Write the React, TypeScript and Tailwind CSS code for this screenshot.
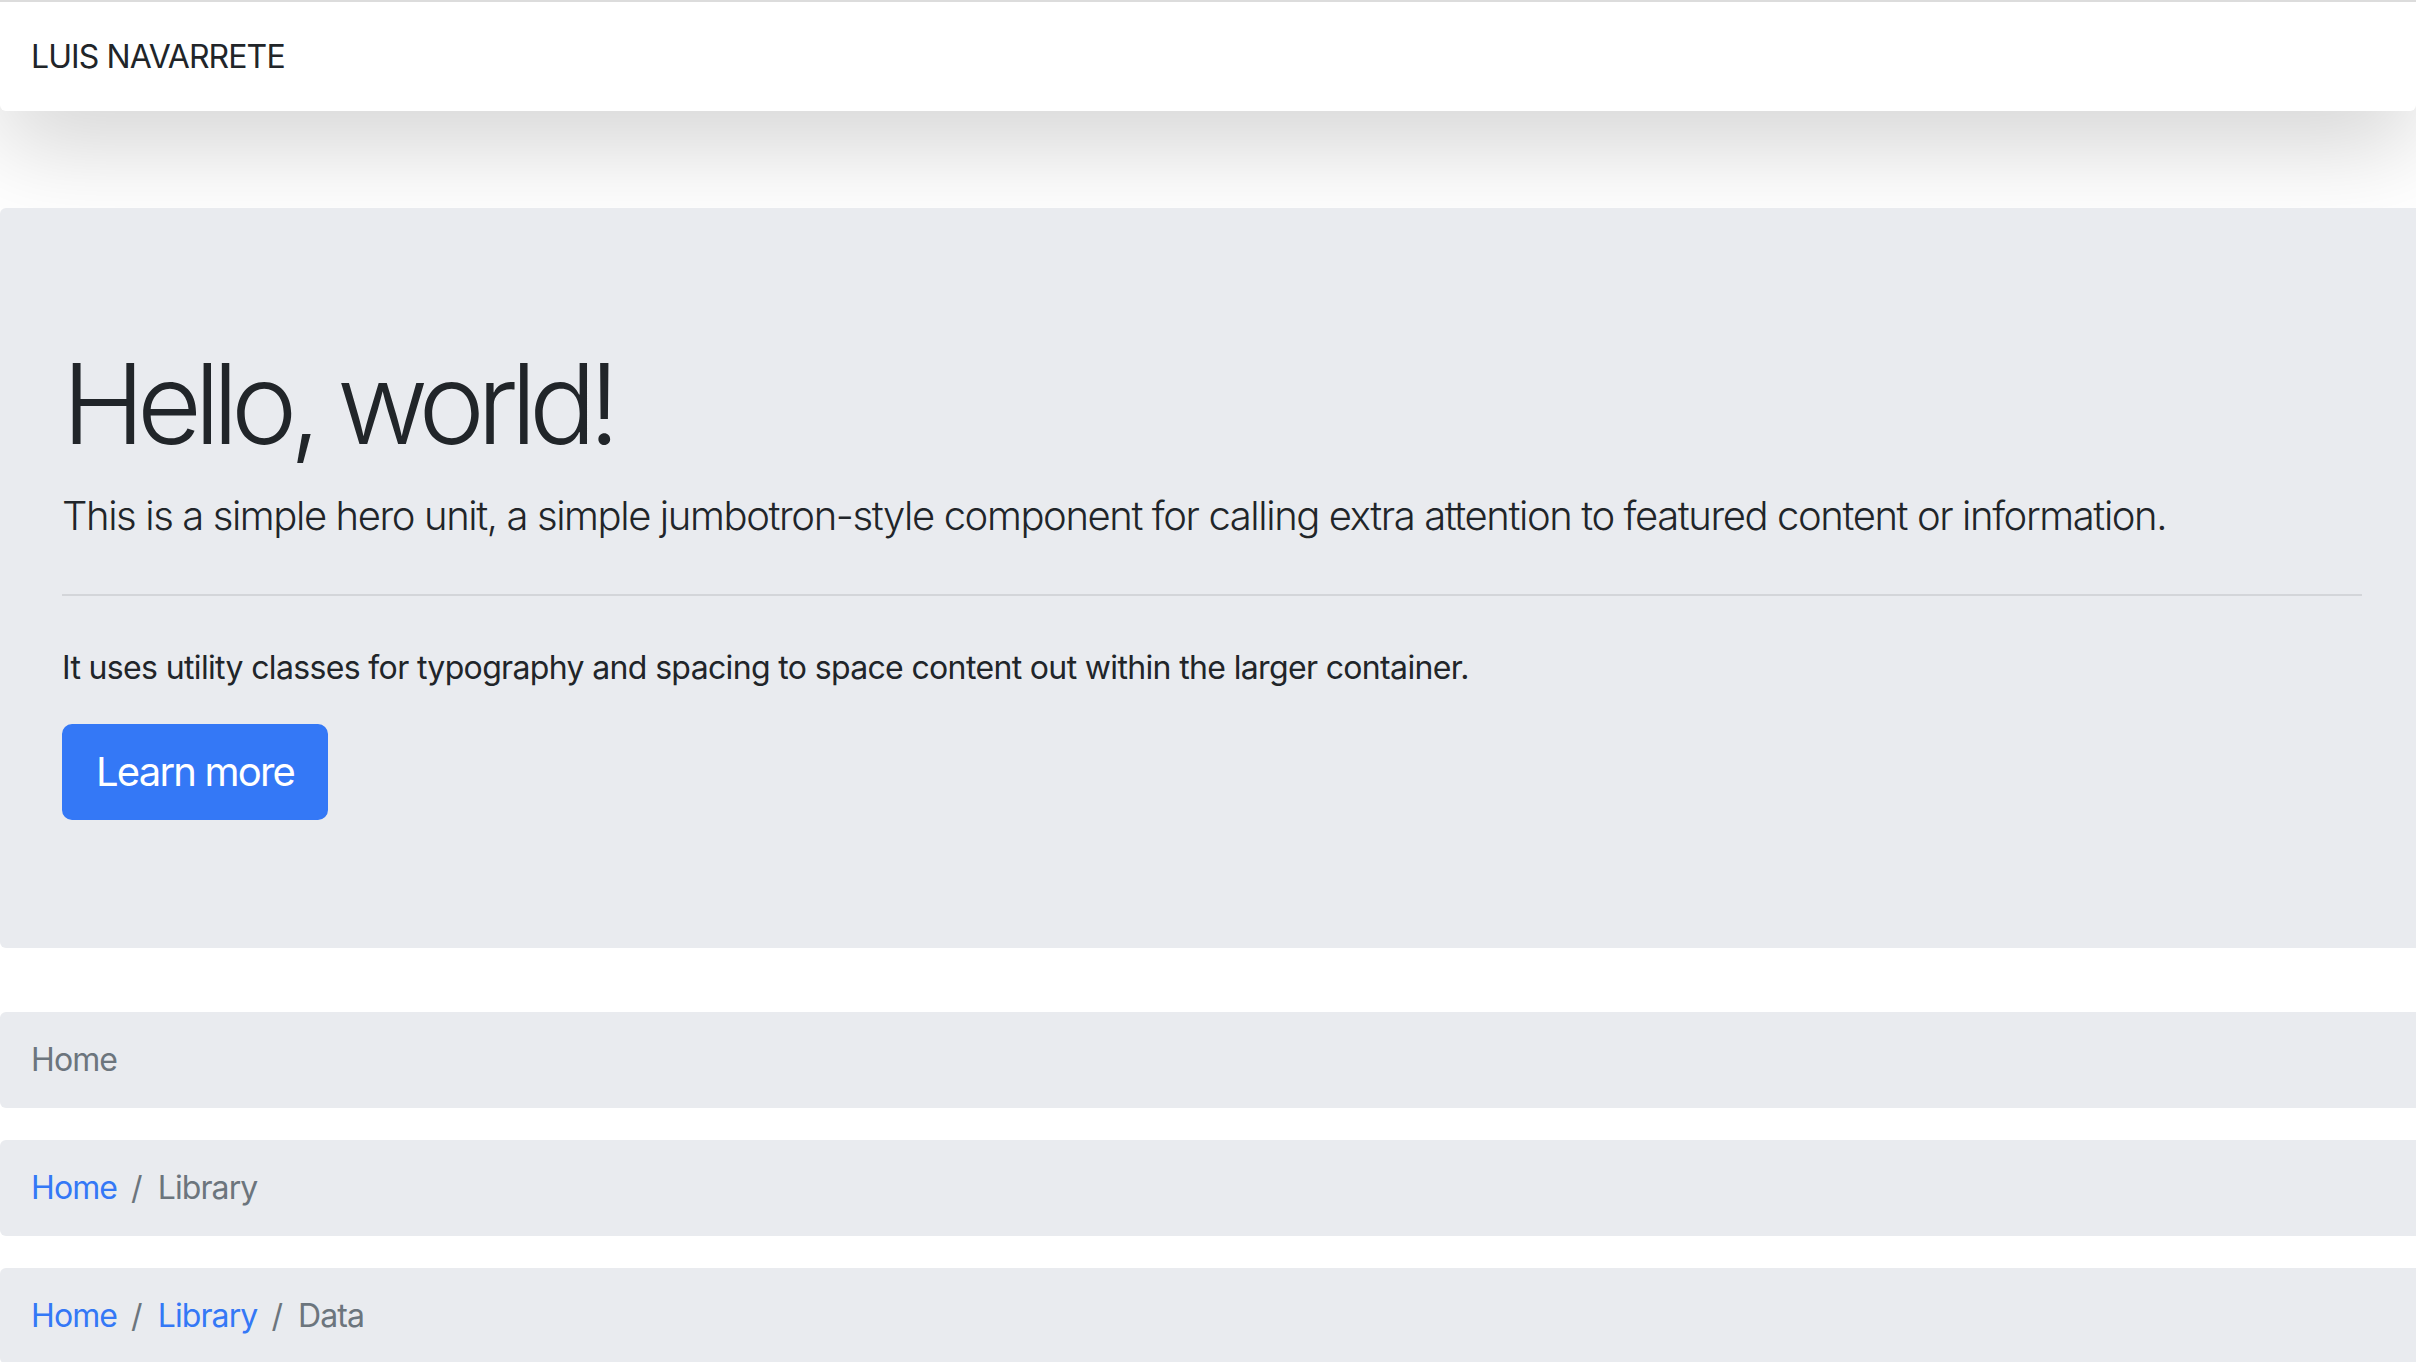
import React from 'react';

const crumbs: string[][] = [['Home'], ['Home', 'Library'], ['Home', 'Library', 'Data']];

const Breadcrumb: React.FC<{ items: string[] }> = ({ items }) => (
    <nav className="bg-[#e9ebef] rounded-l-[6px] px-[31px] py-6 text-[32px] leading-[48px] tracking-[-0.9px]">
        <ol className="flex items-center">
            {items.map((item, i) => {
                const last = i === items.length - 1;
                return (
                    <li key={item} className="flex items-center">
                        {i > 0 && <span className="pl-[14px] pr-4 text-[#6c757d]">/</span>}
                        {last ? (
                            <span className="text-[#6c757d]">{item}</span>
                        ) : (
                            <a href="#" className="text-[#3478f6]">
                                {item}
                            </a>
                        )}
                    </li>
                );
            })}
        </ol>
    </nav>
);

export default function App() {
    return (
        <div className="min-h-screen bg-white overflow-hidden text-[#212529] font-['Inter','Liberation_Sans',sans-serif]">
            {/* Navbar */}
            <header className="h-[111px] border-t-2 border-[#dcdcdc] bg-white rounded-b-[6px] px-[31px] flex items-center shadow-[0_32px_96px_rgba(0,0,0,0.18)]">
                <span className="text-[32px] leading-[48px] tracking-[-0.9px]">LUIS NAVARRETE</span>
            </header>

            {/* Hero */}
            <section className="mt-[97px] bg-[#e9ebef] rounded-l-[6px] pt-[128px] pb-[128px] pl-[62px] pr-[54px]">
                <h1 className="text-[112px] leading-[1.2] font-light tracking-[-7.8px] mb-4">Hello, world!</h1>
                <p className="text-[40px] leading-[60px] font-light tracking-[-1.4px]">
                    This is a simple hero unit, a simple jumbotron-style component for calling extra attention to featured content or information.
                </p>
                <hr className="my-[48px] border-0 border-t-2 border-[#d3d5d9]" />
                <p className="text-[32px] leading-[48px] mb-8 tracking-[-0.65px]">
                    It uses utility classes for typography and spacing to space content out within the larger container.
                </p>
                <a
                    href="#"
                    className="inline-block bg-[#3478f6] border-2 border-[#3478f6] text-white rounded-[10px] px-8 py-4 text-[40px] leading-[60px] tracking-[-1.8px]"
                >
                    Learn more
                </a>
            </section>

            {/* Breadcrumbs */}
            <div className="mt-16 flex flex-col gap-8">
                {crumbs.map((items) => (
                    <Breadcrumb key={items.join('/')} items={items} />
                ))}
            </div>
        </div>
    );
}
